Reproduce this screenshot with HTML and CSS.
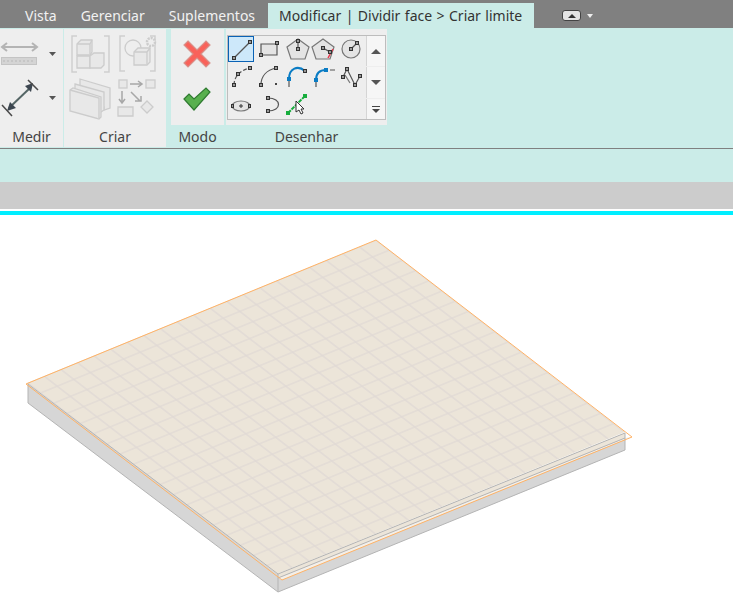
FILE: index.html
```html
<!DOCTYPE html>
<html>
<head>
	<meta charset="utf-8">
	<title>Dividir face</title>
	<link rel="stylesheet" href="styles.css">
</head>
<body>
	<div class="tabs">
		<span class="tab">Vista</span>
		<span class="tab">Gerenciar</span>
		<span class="tab">Suplementos</span>
		<span class="tab active">Modificar | Dividir face &gt; Criar limite</span>
		<span class="minimize"><i></i></span>
		<span class="caret"></span>
	</div>

	<div class="ribbon">
		<div class="panel medir">
			<div class="panelBody">
				<svg class="icons" width="63" height="96" viewBox="0 29 63 96">
					<g fill="none" stroke="#b4b4b4" stroke-width="2">
						<path d="M3 47H36"/>
						<path d="M7 43l-5 4 5 4M32 43l5 4-5 4"/>
					</g>
					<rect x="1.500" y="57.500" width="35" height="7" fill="#d4d4d4" stroke="#c4c4c4"/>
					<path d="M4 60v2M8 60v2M12 60v2M16 60v2M20 60v2M24 60v2M28 60v2M32 60v2" stroke="#b8b8b8"/>
					<path d="M49 96h7l-3.500 4zM49 52h7l-3.500 4z" fill="#555"/>
					<path d="M9 108L31 87" stroke="#566" stroke-width="2" fill="none"/>
					<path d="M25 86l8-3-2 9zM7 111l3-9 6 6z" fill="#3c4650"/>
					<path d="M28 80L38 90M2 105L12 116" stroke="#4a4a4a" stroke-width="1.500"/>
				</svg>
			</div>
			<div class="panelLabel">Medir</div>
		</div>
		<div class="panel criar">
			<div class="panelBody">
				<svg class="icons" width="102" height="96" viewBox="64 29 102 96">
					<g fill="none" stroke="#cfcfcf" stroke-width="1.500">
						<path d="M77 36h-5v36h5M104 36h5v36h-5"/>
						<path d="M125 36h-5v35h5M150 36h5v35h-5"/>
					</g>
					<g fill="#e8e8e8" stroke="#cccccc" stroke-width="1.300">
						<path d="M77 44l4-4h11v12l-2 3H77z"/>
						<path d="M77 44h13v11M90 44l2-4"/>
						<path d="M77 56h13v12H77z"/>
						<path d="M90 56l4-3h10v12l-3 3H90z"/>
						<circle cx="133" cy="48" r="8" fill="none"/>
						<path d="M134 52l4-4h12v14l-3 3h-13z"/>
						<path d="M134 52h13v13M147 52l3-4"/>
						<circle cx="151" cy="42" r="4" fill="#eee" stroke-width="2.500" stroke-dasharray="2 1"/>
						<path d="M80 79l30 9v20l-6 2v-3l-24-6z"/>
						<path d="M75 84l29 8v18l-3 2-26-6z"/>
						<path d="M70 90l3-2 28 9v20l-2 2-29-8z"/>
						<path d="M70 90l29 8v21"/>
						<path d="M118 107h15v9h-15z"/>
						<path d="M147 101l6 6-6 6-6-6z"/>
						<rect x="119" y="80" width="8" height="8"/>
						<rect x="146" y="80" width="9" height="8"/>
					</g>
					<g fill="none" stroke="#a8a8a8" stroke-width="1.500">
						<path d="M130 84h11M138 81l4 3-4 3"/>
						<path d="M122 91v11M119 99l3 4 3-4"/>
						<path d="M131 92l9 9M135 101h6v-5"/>
					</g>
				</svg>
			</div>
			<div class="panelLabel">Criar</div>
		</div>
		<div class="panel modo">
			<div class="panelBody">
				<svg class="icons" width="53" height="96" viewBox="171 29 53 96">
					<path d="M188 41l9 9 9-9 4 4-9 9 9 9-4 4-9-9-9 9-4-4 9-9-9-9z" fill="#f9625a" stroke="#d9918a" stroke-width="1.200"/>
					<path d="M184 99l5-5 5 5 12-11 4 4-16 18z" fill="#58b04e" stroke="#2f7a30" stroke-width="1.200"/>
				</svg>
			</div>
			<div class="panelLabel tinted">Modo</div>
		</div>
		<div class="panel desenhar">
			<div class="panelBody">
				<div class="gallery">
					<svg class="icons" width="139" height="83" viewBox="228 36 139 83">
						<rect class="selected" x="229.500" y="37.500" width="25" height="25"/>
						<path class="edge" d="M235 59L251 43"/>
						<path class="edge shaded" d="M262 45h16v11h-16z"/>
						<path class="edge soft shaded" d="M299 40l11 8-4 12h-14l-4-12z"/>
						<path class="edge" d="M299 42v8"/>
						<path class="edge soft shaded" d="M324 40l11 8-4 12h-14l-4-12z"/>
						<path class="edge" d="M324 49l7 4"/>
						<path d="M334 50l-5 9" stroke="#e8354a" stroke-width="1.500" fill="none"/>
						<circle class="edge soft shaded" cx="352" cy="50" r="9"/>
						<path class="edge" d="M352 50l6-6"/>
						<path class="edge" d="M235 86c0-8 6-15 16-17" stroke-dasharray="4 2"/>
						<path class="edge" d="M262 86c0-9 6-15 15-17"/>
						<path class="arc" d="M290 80c0-11 9-14 16-8"/>
						<path class="edge" d="M290 82v6"/>
						<path class="arc" d="M317 81c0-6 3-10 10-10"/>
						<path class="edge" d="M317 82v6M331 71h5"/>
						<path class="edge" d="M344 78l4-8 8 16 5-9"/>
						<path class="edge soft" d="M346 76l5 8"/>
						<ellipse class="edge soft shaded" cx="242" cy="107" rx="9" ry="5"/>
						<path d="M240 107h4M242 105v4" stroke="#333" fill="none"/>
						<path class="edge" d="M269 99c14 0 14 13 0 13"/>
						<path d="M289 114L306 97" stroke="#16ad3c" stroke-width="2" stroke-dasharray="4 1" fill="none"/>
						<g class="node">
							<rect x="233.500" y="57.500" width="3" height="3"/>
							<rect x="249.500" y="41.500" width="3" height="3"/>
							<rect x="276.500" y="42.500" width="3" height="3"/>
							<rect x="260.500" y="54.500" width="3" height="3"/>
							<rect x="297.500" y="40.500" width="3" height="3"/>
							<rect x="297.500" y="48.500" width="3" height="3"/>
							<rect x="322.500" y="47.500" width="3" height="3"/>
							<rect x="329.500" y="51.500" width="3" height="3"/>
							<rect x="350.500" y="48.500" width="3" height="3"/>
							<rect x="356.500" y="42.500" width="3" height="3"/>
							<rect x="233.500" y="84.500" width="3" height="3"/>
							<rect x="237.500" y="73.500" width="3" height="3"/>
							<rect x="249.500" y="67.500" width="3" height="3"/>
							<rect x="260.500" y="84.500" width="3" height="3"/>
							<rect x="275.500" y="67.500" width="3" height="3"/>
							<rect x="304.500" y="70.500" width="3" height="3"/>
							<rect x="346.500" y="68.500" width="3" height="3"/>
							<rect x="342.500" y="76.500" width="3" height="3"/>
							<rect x="354.500" y="84.500" width="3" height="3"/>
							<rect x="359.500" y="75.500" width="3" height="3"/>
							<rect x="267.500" y="97.500" width="3" height="3"/>
							<rect x="267.500" y="110.500" width="3" height="3"/>
							<rect x="232.500" y="105.500" width="2" height="3"/>
							<rect x="249.500" y="105.500" width="2" height="3"/>
						</g>
						<rect x="276" y="84" width="2" height="2" fill="#444"/>
						<rect x="288" y="78" width="4" height="4" fill="#0a7cc4"/>
						<rect x="315" y="79" width="4" height="4" fill="#0a7cc4"/>
						<rect x="325" y="69" width="4" height="4" fill="#0a7cc4"/>
						<rect x="287" y="112" width="4" height="4" fill="#16ad3c"/>
						<rect x="304" y="95" width="4" height="4" fill="#16ad3c"/>
						<path d="M297 102v11l3-2 2 4 2-1-2-4h3z" fill="#fff" stroke="#333"/>
					</svg>
					<div class="scroll">
						<span class="scrollBtn up"><i></i></span>
						<span class="scrollBtn down"><i></i></span>
						<span class="scrollBtn more"><i></i></span>
					</div>
				</div>
			</div>
			<div class="panelLabel tinted">Desenhar</div>
		</div>
	</div>

	<div class="options"></div>
	<div class="status"></div>
	<div class="cyanBar"></div>

	<div class="canvas">
		<svg width="733" height="390" viewBox="0 215 733 390">
			<defs>
				<pattern id="grid" width="16" height="16" patternUnits="userSpaceOnUse" patternTransform="matrix(.825 .6375 -1.0375 .425 376 240)">
					<path d="M0 0H16V16H0Z" fill="#ece5d9" stroke="#e0d9d5" stroke-width="1.200"/>
				</pattern>
			</defs>
			<path d="M28 384L278 574V592L28 403Z" fill="#d6d6d6"/>
			<path d="M278 574L625 433V450L278 592Z" fill="#d6d6d6"/>
			<path d="M278 578L625 438L631 437L282 580Z" fill="#f3efe9"/>
			<path d="M278 574L625 433V438L278 578Z" fill="#ece5d9"/>
			<path d="M376 240L27 383L277 574L625 432Z" fill="url(#grid)"/>
			<g fill="none" stroke="#b4b4b4">
				<path d="M28 384L278 574L625 433"/>
				<path d="M278 578L625 438"/>
				<path d="M28 384V403L278 592L625 450V433"/>
				<path d="M278 574V592"/>
			</g>
			<path d="M376 240L26 384L282 580L632 437Z" fill="none" stroke="#ffb265"/>
		</svg>
	</div>
</body>
</html>
```

FILE: styles.css
```css
html, body {
	margin: 0;
	padding: 0;
}

body {
	width: 733px;
	height: 605px;
	overflow: hidden;
	background-color: #fff;
	font-family: "Noto Sans", sans-serif;
	display: flex;
	flex-direction: column;
}

.tabs {
	height: 28px;
	background-color: #808080;
	display: flex;
	align-items: flex-end;
	padding-left: 13px;
	box-sizing: border-box;
	flex: none;
}

.tab {
	height: 25px;
	line-height: 25px;
	padding: 0 12px;
	font-size: 14px;
	color: #f2f2f2;
	white-space: nowrap;
}

.tab.active {
	background-color: #cbece8;
	color: #333;
	margin-left: 1px;
	padding: 0 12px 0 11px;
	word-spacing: .8px;
}

.minimize {
	width: 17px;
	height: 9px;
	margin: 0 0 7px 28px;
	border: 1px solid #444;
	border-radius: 3px;
	background-color: #e4e4e4;
	display: flex;
	align-items: center;
	justify-content: center;
}

.minimize i {
	border: 4px solid transparent;
	border-top: 0;
	border-bottom: 4px solid #333;
}

.caret {
	margin: 0 0 10px 6px;
	border: 3px solid transparent;
	border-bottom: 0;
	border-top: 4px solid #eee;
}

.ribbon {
	height: 120px;
	background-color: #cbece8;
	display: flex;
	padding-top: 1px;
	box-sizing: border-box;
	flex: none;
}

.panel {
	height: 118px;
	background-color: #eeeeee;
	display: flex;
	flex-direction: column;
}

.medir { width: 63px; }
.criar { width: 102px; margin-left: 1px; }
.modo { width: 53px; margin-left: 5px; }
.desenhar { width: 161px; margin-left: 2px; }

.panelBody {
	height: 96px;
	flex: none;
}

.icons {
	display: block;
}

.panelLabel {
	flex: 1;
	font-size: 14px;
	line-height: 24px;
	text-align: center;
	color: #444;
}

.tinted {
	background-color: #cbece8;
}

.gallery {
	display: flex;
	width: 159px;
	height: 85px;
	margin: 6px 0 0 1px;
	box-sizing: border-box;
	border: 1px solid #bdbdbd;
	overflow: hidden;
}

.gallery .icons {
	flex: none;
	margin: -1px 0 0 -1px;
}

.scroll {
	display: flex;
	flex-direction: column;
	gap: 1px;
	flex: 1;
}

.scrollBtn {
	background-color: #f6f6f6;
	border-left: 1px solid #d5d5d5;
	display: flex;
	align-items: center;
	justify-content: center;
}

.scrollBtn.up { height: 30px; }
.scrollBtn.down { height: 31px; }
.scrollBtn.more { height: 20px; }

.scrollBtn i {
	border: 5px solid transparent;
}

.up i {
	border-top: 0;
	border-bottom: 5px solid #555;
}

.down i {
	border-bottom: 0;
	border-top: 5px solid #555;
}

.more i {
	border-width: 4px;
	border-bottom: 0;
	border-top: 4px solid #444;
	position: relative;
	top: 2px;
}

.more i::before {
	content: "";
	display: block;
	position: absolute;
	width: 8px;
	height: 1px;
	left: -4px;
	top: -7px;
	background-color: #444;
}

.selected {
	fill: #cde8fa;
	stroke: #0a62b5;
}

.edge {
	fill: none;
	stroke: #555;
	stroke-width: 1.2;
}

.edge.soft {
	stroke: #777;
}

.edge.shaded {
	fill: #e4e4e4;
}

.arc {
	fill: none;
	stroke: #0a7cc4;
	stroke-width: 2;
}

.node rect {
	fill: #999;
	stroke: #333;
	stroke-width: 1;
}

.options {
	height: 34px;
	flex: none;
	background-color: #cbece8;
	border-top: 1px solid #808080;
	box-sizing: border-box;
}

.status {
	height: 27px;
	flex: none;
	background-color: #cccccc;
}

.cyanBar {
	height: 4px;
	flex: none;
	margin-top: 2px;
	background-color: #00eeff;
}

.canvas {
	flex: 1;
}

.canvas svg {
	display: block;
}
```
